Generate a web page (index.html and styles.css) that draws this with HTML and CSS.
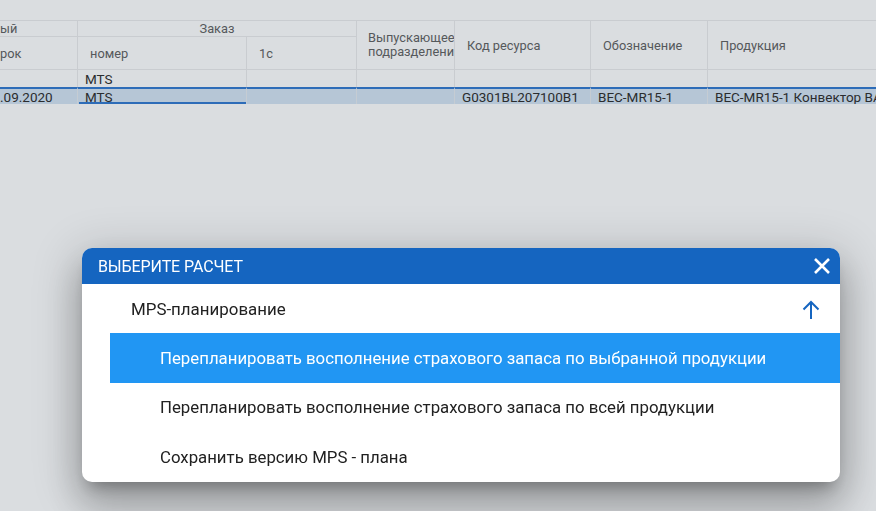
FILE: index.html
```html
<!DOCTYPE html>
<html lang="ru">
<head>
<meta charset="utf-8">
<link rel="stylesheet" href="styles.css">
</head>
<body>
<div class="page">
  <div class="grid">
    <div class="hc g1 c0">ый</div>
    <div class="hc g1 grp">Заказ</div>
    <div class="hc tall c3"><span>Выпускающее<br>подразделение</span></div>
    <div class="hc tall c4">Код ресурса</div>
    <div class="hc tall c5">Обозначение</div>
    <div class="hc tall c6">Продукция</div>
    <div class="hc g2 c0">рок</div>
    <div class="hc g2 c1">номер</div>
    <div class="hc g2 c2">1с</div>

    <div class="fc c0"></div>
    <div class="fc c1">MTS</div>
    <div class="fc"></div>
    <div class="fc"></div>
    <div class="fc"></div>
    <div class="fc"></div>
    <div class="fc last"></div>

    <div class="rc c0">.09.2020</div>
    <div class="rc c1 edit">MTS</div>
    <div class="rc"></div>
    <div class="rc"></div>
    <div class="rc">G0301BL207100B1</div>
    <div class="rc">BEC-MR15-1</div>
    <div class="rc last">BEC-MR15-1 Конвектор ВА</div>
  </div>
</div>

<div class="overlay">
  <div class="dialog">
    <div class="dlg-head">
      <span class="dlg-title">ВЫБЕРИТЕ РАСЧЕТ</span>
      <svg class="close" width="18" height="18" viewBox="0 0 18 18"><path d="M2 2 L16 16 M16 2 L2 16" stroke="#fff" stroke-width="2.6" fill="none"/></svg>
    </div>
    <div class="group">
      <span>MPS-планирование</span>
      <svg class="arrow" width="18" height="20" viewBox="0 0 18 20"><path d="M9 19 V2 M1.5 9.5 L9 2 L16.5 9.5" stroke="#1565c0" stroke-width="2" fill="none"/></svg>
    </div>
    <div class="items">
      <div class="item active">Перепланировать восполнение страхового запаса по выбранной продукции</div>
      <div class="item">Перепланировать восполнение страхового запаса по всей продукции</div>
      <div class="item">Сохранить версию MPS - плана</div>
    </div>
  </div>
</div>
</body>
</html>
```

FILE: styles.css
```css
* { box-sizing: border-box; }
html, body { margin: 0; height: 100%; }
body {
  background: #dadde0;
  font-family: Roboto, "Noto Sans", sans-serif;
  overflow: hidden;
}
.page { padding-top: 20px; }
.grid {
  display: grid;
  grid-template-columns: 78px 169px 110px 98px 136px 117px 1fr;
  grid-template-rows: 16px 33px 17px 17px;
  border-top: 1px solid #c9ccd0;
  width: 900px;
}
.hc {
  font-size: 12.8px;
  color: #55585b;
  border-right: 1px solid #c9ccd0;
  border-bottom: 1px solid #c9ccd0;
  display: flex;
  align-items: center;
  padding-left: 12px;
  white-space: nowrap;
  overflow: hidden;
}
.hc.c0 { padding-left: 0; }
.g1.c0 { grid-column: 1; grid-row: 1; }
.grp { grid-column: 2 / span 2; grid-row: 1; justify-content: center; padding-left: 0; }
.tall { grid-row: 1 / span 2; }
.tall.c3 { grid-column: 4; padding-left: 11px; line-height: 14px; }
.tall.c4 { grid-column: 5; }
.tall.c5 { grid-column: 6; }
.tall.c6 { grid-column: 7; }
.g2.c0 { grid-column: 1; grid-row: 2; }
.g2.c1 { grid-column: 2; grid-row: 2; }
.g2.c2 { grid-column: 3; grid-row: 2; }

.fc {
  font-size: 13.5px;
  color: #2a2c2e;
  border-right: 1px solid #c9ccd0;
  display: flex;
  align-items: center;
  padding-left: 7px;
  white-space: nowrap;
}
.rc {
  font-size: 13.5px;
  color: #2a2c2e;
  background: #b6c6d6;
  border-top: 2px solid #2d6cb8;
  border-right: 1px solid #c5ccd3;
  display: flex;
  align-items: center;
  padding-left: 7px;
  white-space: nowrap;
  overflow: hidden;
  line-height: 14px;
}
.c0.fc, .c0.rc { padding-left: 0; }
.edit { position: relative; }
.edit::after {
  content: "";
  position: absolute;
  left: 1px; right: 0; bottom: 0;
  height: 2px;
  background: #2d6cb8;
}

.overlay {
  position: fixed;
  inset: 0;
  padding: 248px 0 0 82px;
}
.dialog {
  width: 758px;
  background: #fff;
  border-radius: 10px;
  overflow: hidden;
  box-shadow: 0 11px 15px -7px rgba(0,0,0,.28), 0 24px 38px 3px rgba(0,0,0,.2), 0 9px 46px 8px rgba(0,0,0,.16);
}
.dlg-head {
  height: 36px;
  background: #1565c0;
  display: flex;
  align-items: center;
  justify-content: space-between;
  padding: 0 9px 0 16px;
}
.dlg-title {
  color: #fff;
  font-size: 16px;
  letter-spacing: -0.1px;
}
.close { display: block; }
.group {
  height: 49px;
  display: flex;
  align-items: center;
  justify-content: space-between;
  padding: 0 20px 0 49px;
  font-size: 16.9px;
  color: #212121;
}
.arrow { display: block; margin-top: 2px; }
.items { margin-left: 28px; }
.item {
  height: 49.5px;
  display: flex;
  align-items: center;
  padding-left: 50px;
  font-size: 16.8px;
  color: #212121;
}
.item.active {
  background: #2196f3;
  color: #fff;
}
```
